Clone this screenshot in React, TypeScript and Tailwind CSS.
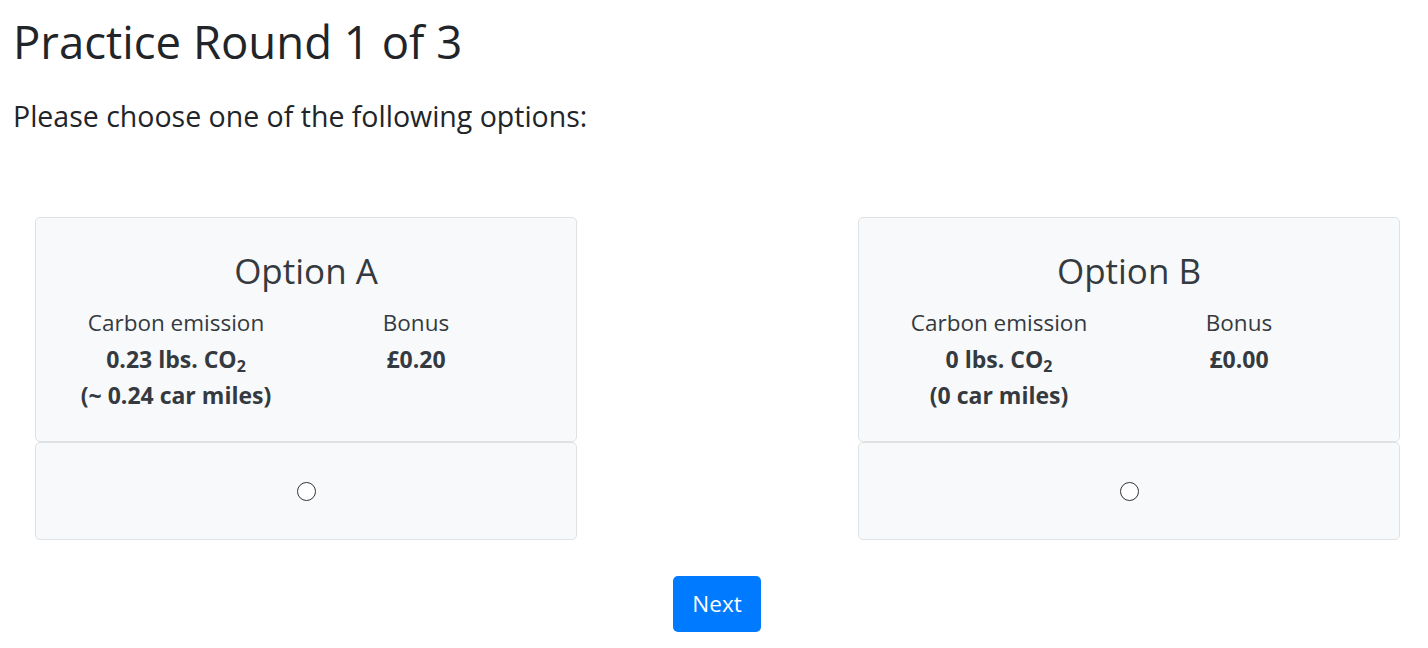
import React from 'react'

interface OptionData {
  label: string
  co2: string
  miles: string
  bonus: string
}

const OPTIONS: OptionData[] = [
  { label: 'Option A', co2: '0.23', miles: '(~ 0.24 car miles)', bonus: '£0.20' },
  { label: 'Option B', co2: '0', miles: '(0 car miles)', bonus: '£0.00' },
]

function OptionCard({ option }: { option: OptionData }) {
  return (
    <div className="w-[542px] text-[#343a40]">
      <div className="h-[225px] rounded-[5px] border border-[#dfe2e5] bg-[#f8f9fa] pt-[30px]">
        <h3 className="text-center text-[35px] leading-[46px]">{option.label}</h3>
        <div className="mt-[11px] grid grid-cols-[240px_240px] pl-[20px] text-[22.5px] leading-[36px]">
          <div className="text-center">
            <div>Carbon emission</div>
            <div className="text-[23px] font-bold">
              {option.co2} lbs. CO<sub className="text-[16px] leading-none">2</sub>
            </div>
            <div className="text-[23px] font-bold">{option.miles}</div>
          </div>
          <div className="text-center">
            <div>Bonus</div>
            <div className="text-[23px] font-bold">{option.bonus}</div>
          </div>
        </div>
      </div>
      <div className="flex h-[98px] items-center justify-center rounded-[5px] border border-[#dfe2e5] bg-[#f8f9fa]">
        <input
          type="radio"
          name="choice"
          className="h-[19px] w-[19px] appearance-none rounded-full border border-[#333] bg-white"
        />
      </div>
    </div>
  )
}

export default function App() {
  return (
    <div className="min-h-screen bg-white font-['Open_Sans',sans-serif] text-[#212529]">
      <div className="px-[13px] pt-[12px]">
        <h1 className="text-[45.5px] leading-[58px]">Practice Round 1 of 3</h1>
        <p className="mt-[28px] text-[28.5px] leading-[36px]">Please choose one of the following options:</p>
      </div>
      <div className="mt-[83px] flex justify-between pl-[35px] pr-[28px]">
        {OPTIONS.map((o) => (
          <OptionCard key={o.label} option={o} />
        ))}
      </div>
      <div className="mt-[36px] flex justify-center pl-[6px]">
        <button
          type="button"
          className="h-[56px] w-[88px] rounded-[5px] bg-[#007bff] text-[22.5px] text-white"
        >
          Next
        </button>
      </div>
    </div>
  )
}
